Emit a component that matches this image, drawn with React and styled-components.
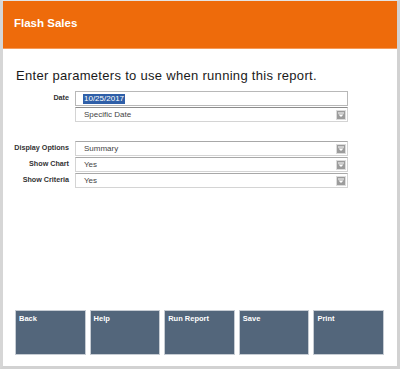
import styled, { createGlobalStyle } from "styled-components"

const GlobalStyle = createGlobalStyle`
  html, body {
    margin: 0;
    padding: 0;
    background: #ffffff;
    font-family: "Liberation Sans", Arial, sans-serif;
  }
`

const buttons = ["Back", "Help", "Run Report", "Save", "Print"]

function Dropdown({ value, first }) {
  return (
    <Select first={first}>
      <SelectText>{value}</SelectText>
      <Arrow>
        <svg width="8" height="8" viewBox="0 0 8 8">
          <rect x="1" y="1.5" width="6" height="1" fill="#ffffff" />
          <polygon points="1.5,3.5 6.5,3.5 4,6" fill="#ffffff" />
        </svg>
      </Arrow>
    </Select>
  )
}

export default function App() {
  return (
    <>
      <GlobalStyle />
      <Frame>
        <Header>
          <Title>Flash Sales</Title>
        </Header>
        <Content>
          <Heading>Enter parameters to use when running this report.</Heading>
          <Form>
            <Label>Date</Label>
            <FieldStack>
              <DateInput>
                <Selected>10/25/2017</Selected>
              </DateInput>
              <Dropdown value="Specific Date" />
            </FieldStack>

            <Divider />

            <Label>Display Options</Label>
            <Dropdown value="Summary" first />
            <Label>Show Chart</Label>
            <Dropdown value="Yes" first />
            <Label>Show Criteria</Label>
            <Dropdown value="Yes" first />
          </Form>
        </Content>
        <ButtonBar>
          {buttons.map(b => (
            <ActionButton key={b}>{b}</ActionButton>
          ))}
        </ButtonBar>
      </Frame>
    </>
  )
}

const Frame = styled.div`
  width: 400px;
  height: 369px;
  box-sizing: border-box;
  display: flex;
  flex-direction: column;
  background: #ffffff;
  border-top: 1px solid #e4e4e4;
  border-left: 3px solid #d6d6d6;
  border-right: 3px solid #d2d2d2;
  border-bottom: 3px solid #d2d2d2;
`

const Header = styled.div`
  height: 48px;
  flex-shrink: 0;
  background: #ee6b0b;
  border-bottom: 1px solid #f59a5a;
  display: flex;
  align-items: center;
  padding: 0 11px;
  box-sizing: border-box;
`

const Title = styled.h1`
  margin: 0 0 4px 0;
  color: #ffffff;
  font-size: 11.5px;
  font-weight: bold;
`

const Content = styled.div`
  flex: 1;
  padding: 19px 0 0 0;
`

const Heading = styled.h2`
  margin: 0 0 8px 13px;
  font-size: 13px;
  line-height: 15px;
  letter-spacing: 0.3px;
  font-weight: normal;
  color: #1a1a1a;
`

const Form = styled.div`
  display: grid;
  grid-template-columns: 66px 273px;
  column-gap: 6px;
  row-gap: 1px;
  align-items: start;
`

const Label = styled.div`
  text-align: right;
  font-size: 7.2px;
  font-weight: bold;
  color: #333333;
  padding-top: 2px;
  white-space: nowrap;
`

const FieldStack = styled.div`
  display: flex;
  flex-direction: column;
  gap: 1px;
`

const Divider = styled.div`
  grid-column: 1 / 3;
  height: 17px;
`

const DateInput = styled.div`
  height: 15px;
  box-sizing: border-box;
  border: 1px solid #b8b8b8;
  display: flex;
  align-items: center;
  padding-left: 7px;
`

const Selected = styled.span`
  background: #2f5fa8;
  color: #ffffff;
  font-size: 8px;
  line-height: 10px;
  padding: 0 1px;
`

const Select = styled.div`
  height: 15px;
  box-sizing: border-box;
  border: 1px solid #d4d4d4;
  border-top: 1px solid ${p => (p.first ? "#a8a8a8" : "#8c8c8c")};
  display: flex;
  align-items: center;
  justify-content: space-between;
  padding: 0 1px 0 8px;
`

const SelectText = styled.span`
  font-size: 8px;
  color: #444444;
`

const Arrow = styled.span`
  width: 10px;
  height: 10px;
  box-sizing: border-box;
  background: #9c9c9c;
  border: 1px solid #dcdcdc;
  display: flex;
  align-items: center;
  justify-content: center;
`

const ButtonBar = styled.div`
  display: flex;
  gap: 4px;
  padding: 0 13px 11px 12px;
`

const ActionButton = styled.button`
  flex: 1;
  height: 45px;
  box-sizing: border-box;
  background: #53667b;
  border: 1px solid #c6ccd3;
  color: #ffffff;
  font-family: "Liberation Sans", Arial, sans-serif;
  font-size: 7.5px;
  font-weight: bold;
  text-align: left;
  display: flex;
  align-items: flex-start;
  padding: 3px 3px;
  cursor: pointer;
`
